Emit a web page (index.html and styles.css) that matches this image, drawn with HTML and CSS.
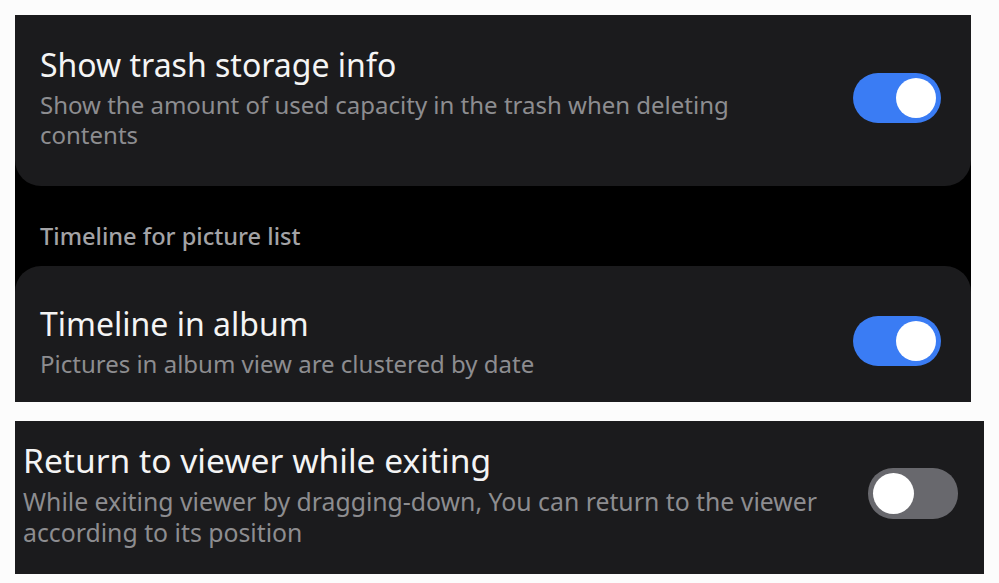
FILE: index.html
```html
<!DOCTYPE html>
<html lang="en">
<head>
<meta charset="utf-8">
<title>Settings</title>
<link rel="stylesheet" href="styles.css">
</head>
<body>
  <div class="panel panel-top">
    <div class="card card-first">
      <div class="text">
        <div class="title">Show trash storage info</div>
        <div class="desc">Show the amount of used capacity in the trash when deleting contents</div>
      </div>
      <div class="switch on"><span class="knob"></span></div>
    </div>
    <div class="section-header">Timeline for picture list</div>
    <div class="card card-second">
      <div class="text">
        <div class="title">Timeline in album</div>
        <div class="desc">Pictures in album view are clustered by date</div>
      </div>
      <div class="switch on"><span class="knob"></span></div>
    </div>
  </div>
  <div class="panel panel-bottom">
    <div class="card card-single">
      <div class="text">
        <div class="title">Return to viewer while exiting</div>
        <div class="desc">While exiting viewer by dragging-down, You can return to the viewer according to its position</div>
      </div>
      <div class="switch off"><span class="knob"></span></div>
    </div>
  </div>
</body>
</html>
```

FILE: styles.css
```css
html, body {
  margin: 0;
  padding: 0;
  background: #fcfcfc;
  font-family: "Noto Sans", "Open Sans", sans-serif;
}

body {
  padding-top: 15px;
  padding-left: 15px;
}

.panel {
  background: #000;
  display: flex;
  flex-direction: column;
}

.panel-top {
  width: 956px;
  height: 387px;
}

.panel-bottom {
  width: 969px;
  height: 153px;
  margin-top: 19px;
}

.card {
  background: #1b1b1d;
  display: flex;
  align-items: center;
  justify-content: space-between;
  box-sizing: border-box;
}

.card-first {
  height: 171px;
  border-radius: 0 0 26px 26px;
  padding: 0 30px 6px 25px;
}

.card-second {
  height: 136px;
  border-radius: 26px 26px 0 0;
  padding: 14px 30px 0 25px;
}

.card-single {
  height: 153px;
  padding: 0 26px 8px 8px;
}

.text {
  display: flex;
  flex-direction: column;
}

.card-first .text { width: 720px; }
.card-single .text { width: 830px; }

.title {
  color: #f4f4f4;
  font-size: 32px;
  line-height: 40px;
  margin-bottom: 5px;
}

.desc {
  color: #8d8d90;
  font-size: 24px;
  line-height: 30px;
}

.card-single .title {
  font-size: 33.6px;
  line-height: 40px;
  margin-bottom: 6px;
}

.card-single .desc {
  font-size: 24.8px;
  line-height: 31px;
}

.section-header {
  height: 80px;
  box-sizing: border-box;
  padding: 35px 0 0 25px;
  color: #a3a3a6;
  font-size: 23.6px;
  line-height: 30px;
  font-weight: 500;
}

.switch {
  width: 88px;
  height: 50px;
  border-radius: 25px;
  box-sizing: border-box;
  padding: 5px;
  display: flex;
  flex-shrink: 0;
}

.switch.on {
  background: #3a7cf4;
  justify-content: flex-end;
}

.switch.off {
  background: #68686d;
  justify-content: flex-start;
  width: 90px;
  height: 51px;
}

.knob {
  width: 40px;
  height: 40px;
  border-radius: 50%;
  background: #fff;
}

.switch.off .knob {
  width: 41px;
  height: 41px;
}
```
